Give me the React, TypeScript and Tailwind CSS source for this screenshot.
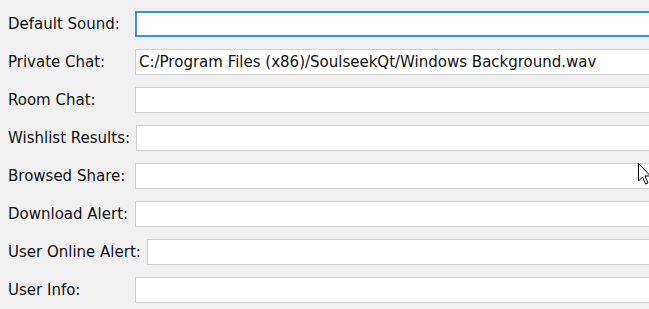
import React from 'react';

const rows = [
  { label: 'Default Sound:', value: '', focused: true },
  { label: 'Private Chat:', value: 'C:/Program Files (x86)/SoulseekQt/Windows Background.wav' },
  { label: 'Room Chat:', value: '' },
  { label: 'Wishlist Results:', value: '' },
  { label: 'Browsed Share:', value: '' },
  { label: 'Download Alert:', value: '' },
  { label: 'User Online Alert:', value: '' },
  { label: 'User Info:', value: '' },
];

const Cursor = () => (
  <svg className="absolute left-[638px] top-[163px]" width="14" height="24" viewBox="0 0 14 24">
    <path d="M0.5 0.5 L0.5 18 L4.5 14 L7.5 21 L10 20 L7 13 L12.5 13 Z" fill="#fff" stroke="#000" strokeWidth="1" />
  </svg>
);

const App = () => {
  return (
    <div
      className="relative w-[649px] h-[309px] overflow-hidden bg-[#f0f0f0] text-[#111] text-[15px]"
      style={{ fontFamily: '"DejaVu Sans", Verdana, sans-serif' }}
    >
      <div className="flex flex-col gap-[12px] pt-[11px] pl-[8px] w-[670px]">
        {rows.map((r) => (
          <div key={r.label} className="flex items-center h-[26px]">
            <span className="min-w-[121px] whitespace-nowrap">{r.label}</span>
            <div
              className={`ml-[6px] flex-1 h-[26px] bg-white flex items-center pl-[3px] whitespace-nowrap ${
                r.focused ? 'border-2 border-[#3f8ee6]' : 'border border-[#cfcfcf]'
              }`}
            >
              {r.value}
            </div>
          </div>
        ))}
      </div>
      <Cursor />
    </div>
  );
};

export default App;
